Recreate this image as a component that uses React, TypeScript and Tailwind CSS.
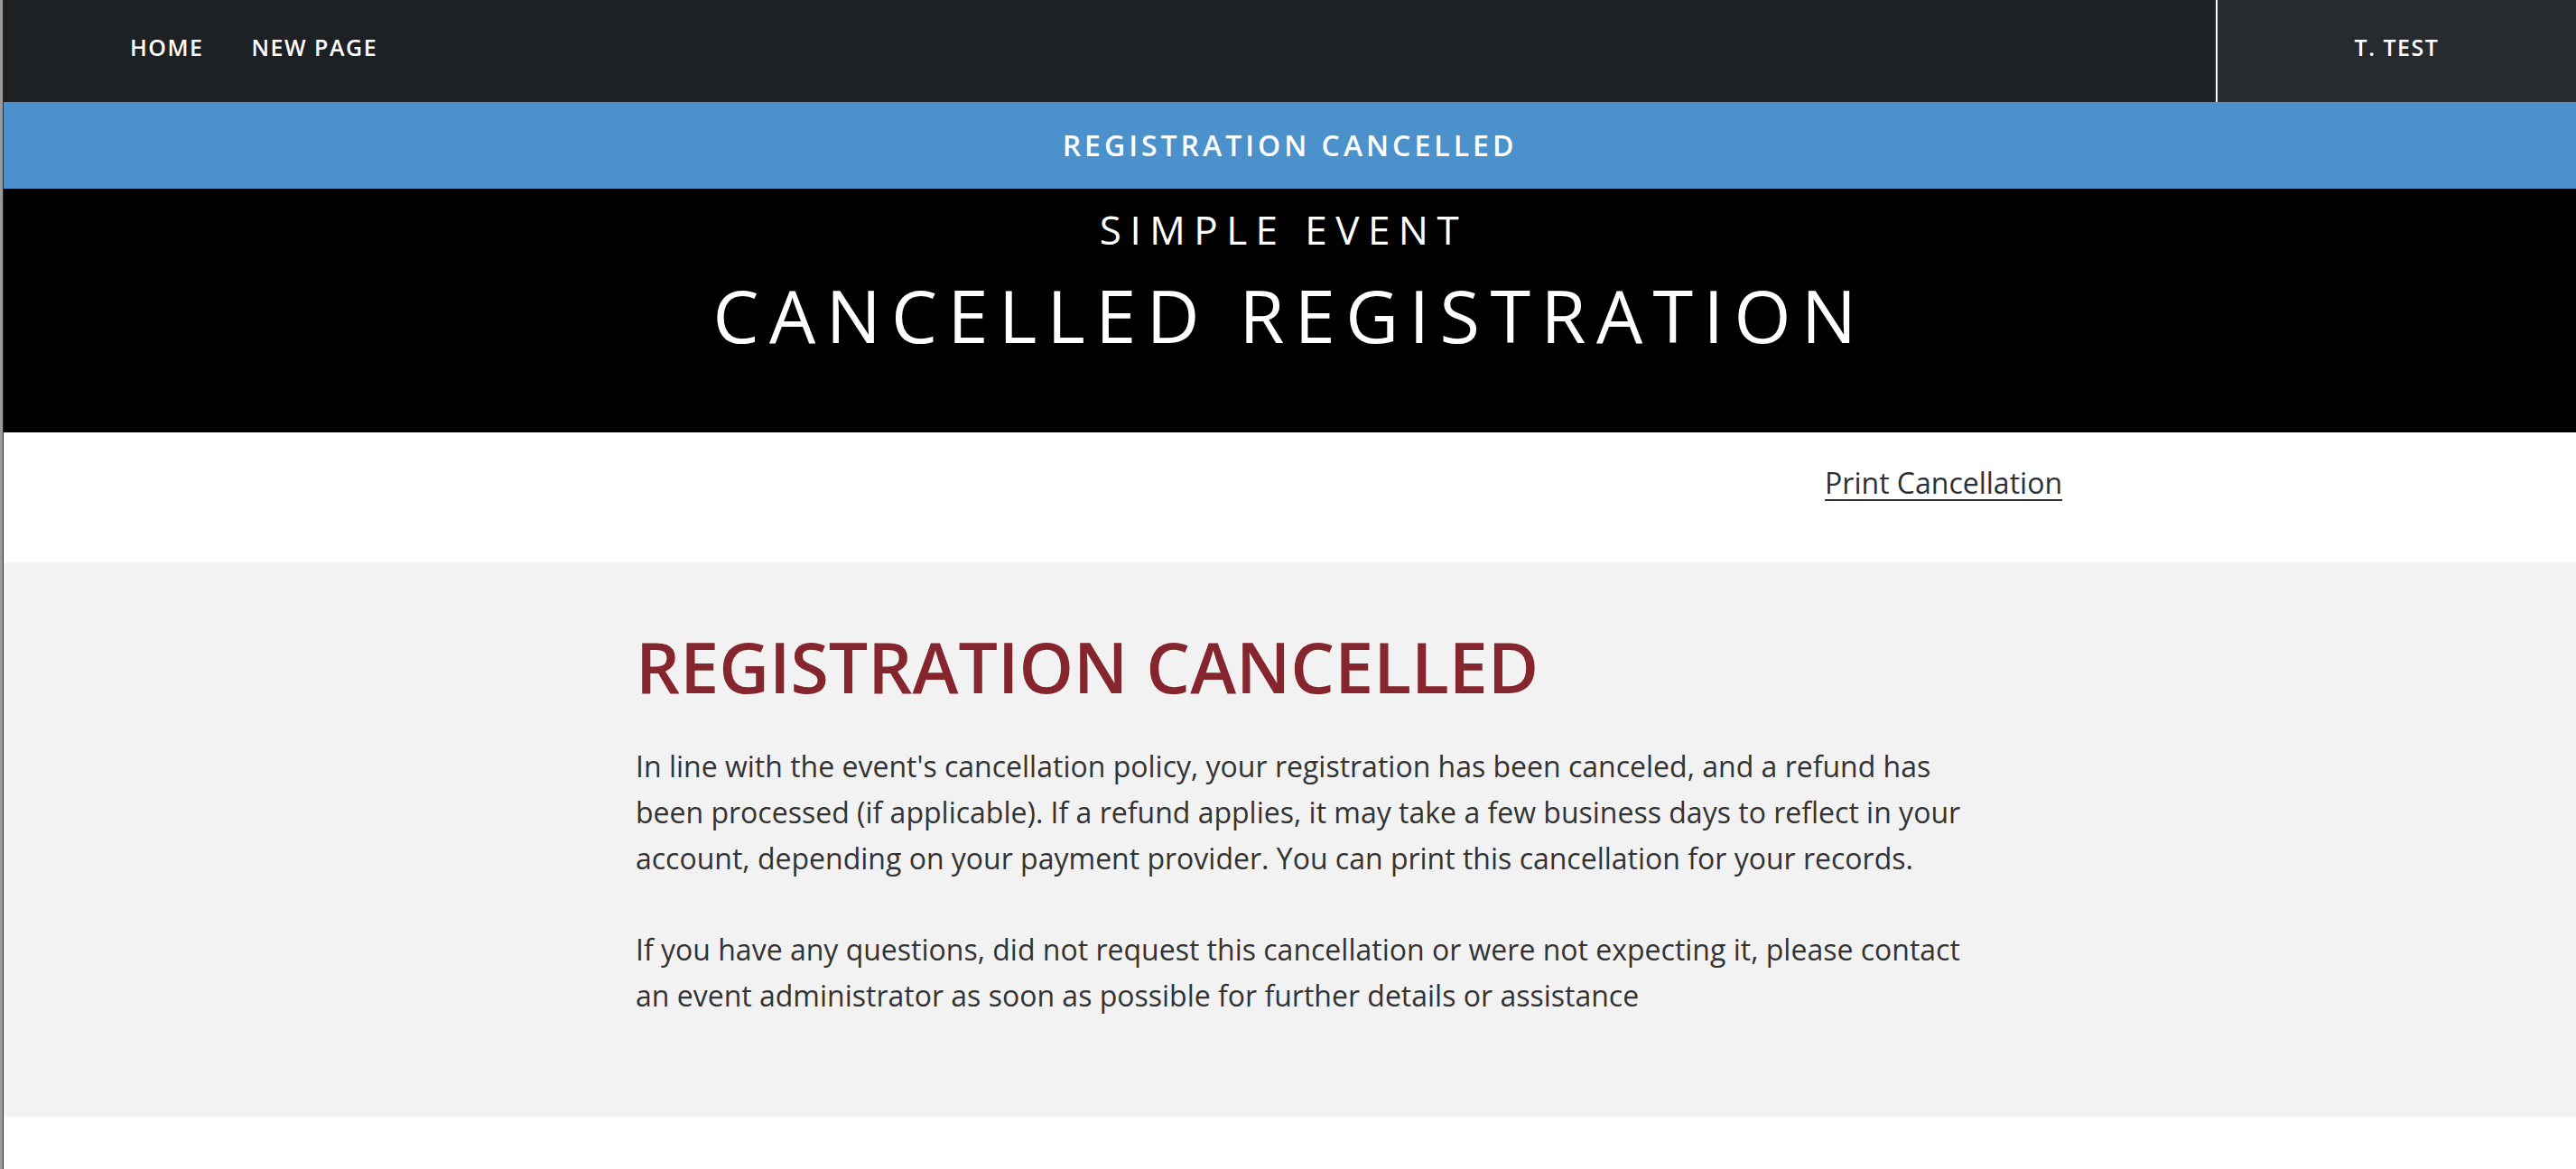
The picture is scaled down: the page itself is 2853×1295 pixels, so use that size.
export default function App() {
  return (
    <div className="min-h-screen bg-white border-l-[3px] border-[#9a9a9a] font-['Open_Sans',sans-serif]">
      <div className="border-l border-[#2b2b2b] min-h-screen">
        {/* top nav */}
        <header className="flex h-[113px] bg-[#1e2124]">
          <nav className="flex flex-1 items-center gap-[53px] pl-[140px] pb-[8px] text-[25px] font-semibold tracking-[0.06em] text-white">
            <a href="#">HOME</a>
            <a href="#">NEW PAGE</a>
          </nav>
          <div className="flex w-[399px] items-center justify-center border-l-2 border-white bg-[#272a2f] pb-[8px] text-[25px] font-semibold tracking-[0.06em] text-white">
            T. TEST
          </div>
        </header>

        {/* status banner */}
        <div className="flex h-[96px] items-center justify-center bg-[#4b92cc] text-[32px] font-semibold tracking-[0.125em] text-white">
          REGISTRATION CANCELLED
        </div>

        {/* hero */}
        <section className="flex h-[270px] flex-col items-center bg-black pt-[19px] text-white">
          <div className="mr-[14px] text-[44px] leading-[1.2] tracking-[0.215em]">SIMPLE EVENT</div>
          <h1 className="mt-[19px] text-[81px] font-normal leading-[1.2] tracking-[0.141em]">
            CANCELLED REGISTRATION
          </h1>
        </section>

        {/* print link */}
        <div className="h-[144px] pt-[30px]">
          <div className="ml-[700px] flex w-[1580px] justify-end">
            <a href="#" className="text-[32px] leading-[1.6] text-[#2d3035] underline decoration-2 underline-offset-[6px]">
              Print Cancellation
            </a>
          </div>
        </div>

        {/* message */}
        <section className="h-[614px] bg-[#f2f2f2] pt-[70px]">
          <div className="ml-[700px] w-[1480px]">
            <h2 className="text-[77px] font-semibold leading-[1.2] text-[#85262f]">REGISTRATION CANCELLED</h2>
            <p className="mt-[38px] text-[32px] leading-[51px] text-[#333333]">
              In line with the event's cancellation policy, your registration has been canceled, and a refund has been
              processed (if applicable). If a refund applies, it may take a few business days to reflect in your
              account, depending on your payment provider. You can print this cancellation for your records.
            </p>
            <p className="mt-[50px] text-[32px] leading-[51px] text-[#333333]">
              If you have any questions, did not request this cancellation or were not expecting it, please contact an
              event administrator as soon as possible for further details or assistance
            </p>
          </div>
        </section>
      </div>
    </div>
  );
}
